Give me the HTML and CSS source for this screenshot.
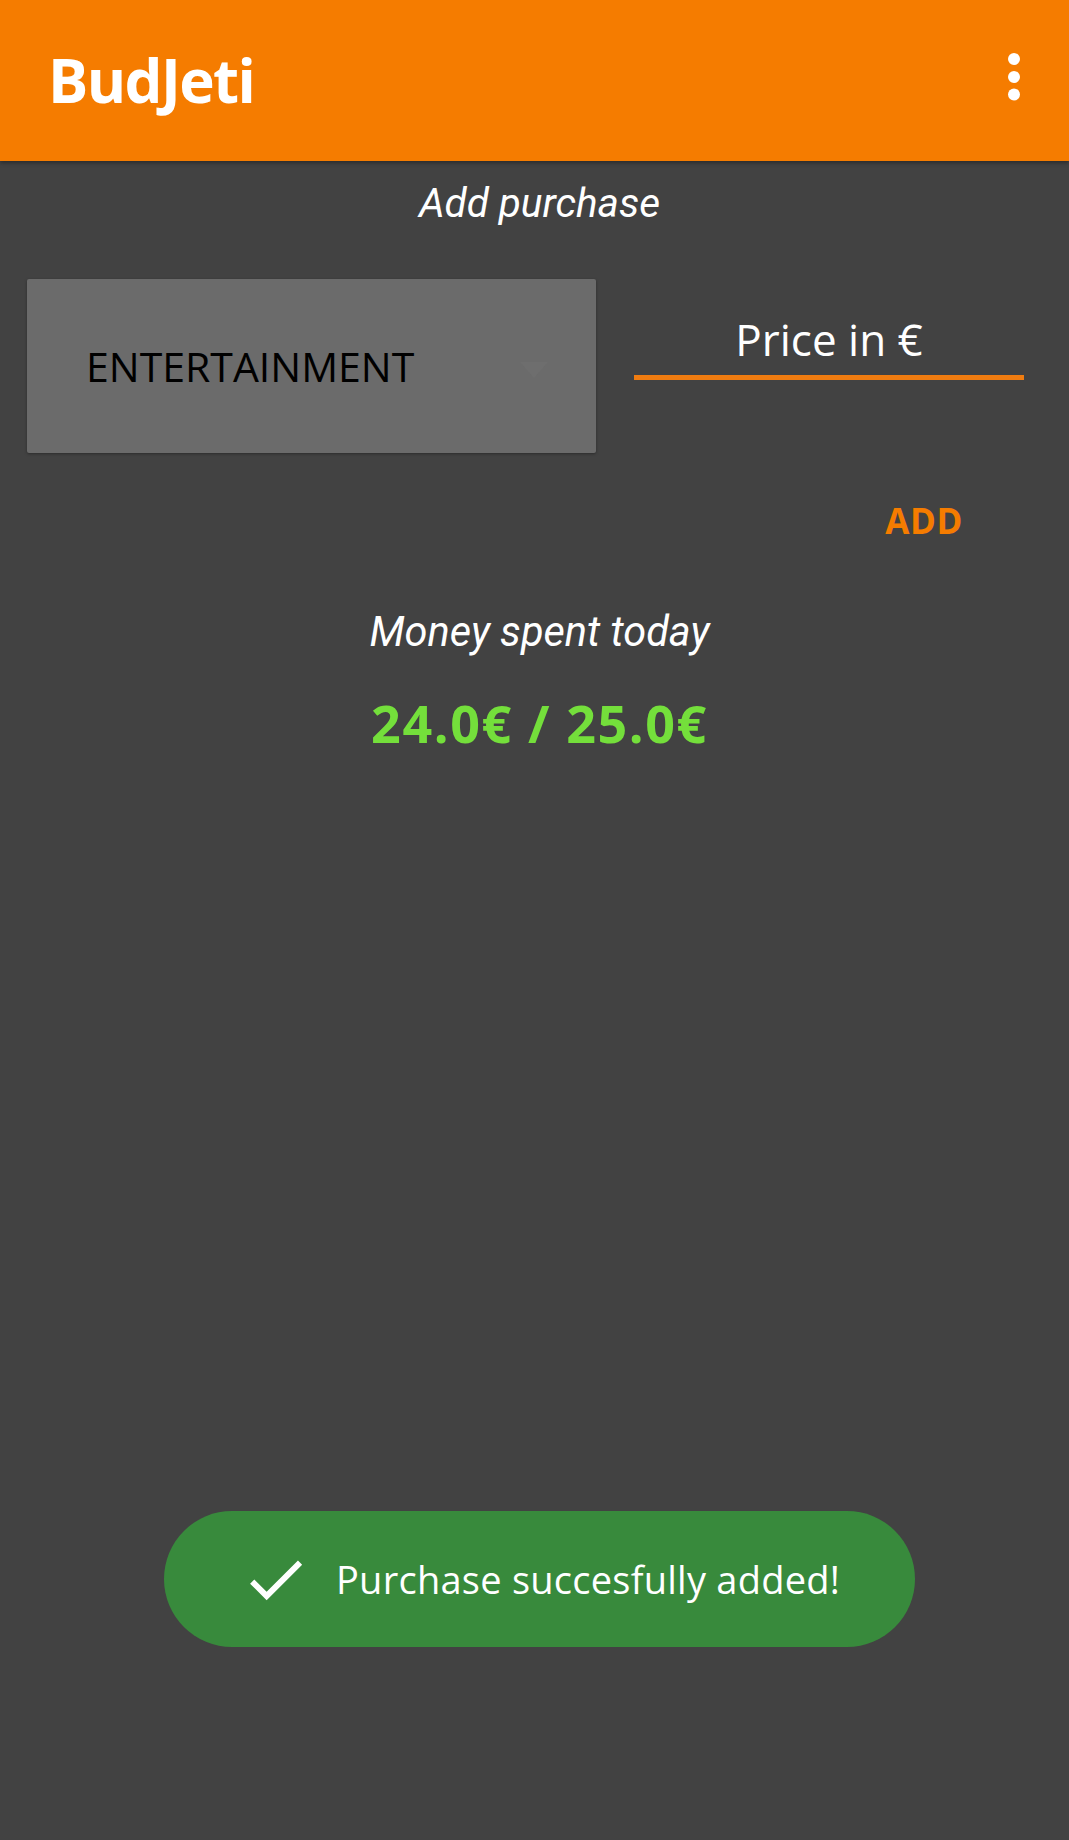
FILE: index.html
```html
<!DOCTYPE html>
<html lang="en">
<head>
<meta charset="utf-8">
<title>BudJeti</title>
<link rel="stylesheet" href="styles.css">
</head>
<body>
<div class="screen">
  <header class="appbar">
    <div class="title">BudJeti</div>
    <svg class="overflow" width="12" height="48" viewBox="0 0 12 48" aria-hidden="true">
      <circle cx="6" cy="6" r="6" fill="#fff"/>
      <circle cx="6" cy="24" r="6" fill="#fff"/>
      <circle cx="6" cy="41.5" r="6" fill="#fff"/>
    </svg>
  </header>

  <main class="content">
    <div class="heading">Add purchase</div>

    <div class="form-row">
      <div class="spinner">
        <span class="spinner-text">ENTERTAINMENT</span>
        <svg class="spinner-arrow" width="32" height="20" viewBox="0 0 32 20" aria-hidden="true">
          <path d="M2 2 L30 2 L16 18 Z" fill="#6e6e6e"/>
        </svg>
      </div>
      <div class="price-field">
        <div class="price-hint">Price in €</div>
        <div class="price-line"></div>
      </div>
    </div>

    <div class="actions">
      <span class="add-btn">ADD</span>
    </div>

    <div class="spent-label">Money spent today</div>
    <div class="spent-value">24.0€ / 25.0€</div>
  </main>

  <div class="toast">
    <svg class="toast-icon" width="71" height="71" viewBox="0 0 24 24" aria-hidden="true">
      <path d="M9 16.17L4.83 12l-1.42 1.41L9 19 21 7l-1.41-1.41z" fill="#fff"/>
    </svg>
    <span class="toast-text">Purchase succesfully added!</span>
  </div>
</div>
</body>
</html>
```

FILE: styles.css
```css
html, body {
  margin: 0;
  padding: 0;
}

body {
  background: #424242;
  width: 1069px;
  height: 1840px;
  overflow: hidden;
}

.screen {
  position: relative;
  width: 1069px;
  height: 1840px;
  background: #424242;
}

.appbar {
  height: 161px;
  box-sizing: border-box;
  background: #f57c00;
  display: flex;
  align-items: flex-start;
  justify-content: space-between;
  padding: 50px 49px 0 48px;
  box-shadow: 0 2px 4px rgba(0, 0, 0, 0.35);
  position: relative;
  z-index: 1;
}

.title {
  font-family: "Open Sans", "DejaVu Sans", sans-serif;
  font-weight: 700;
  font-size: 60px;
  line-height: 60px;
  color: #ffffff;
  letter-spacing: -1.6px;
}

.overflow {
  margin-top: 3px;
}

.content {
  display: flex;
  flex-direction: column;
}

.heading {
  margin-top: 18px;
  padding-left: 10px;
  text-align: center;
  font-family: Roboto, "Liberation Sans", sans-serif;
  font-style: italic;
  font-size: 40.5px;
  line-height: 48px;
  color: #ffffff;
}

.form-row {
  display: flex;
  align-items: flex-start;
  margin-top: 52px;
  padding-left: 27px;
}

.spinner {
  width: 569px;
  height: 174px;
  background: #6b6b6b;
  box-shadow: 0 1px 3px rgba(0, 0, 0, 0.35);
  border-radius: 2px;
  display: flex;
  align-items: center;
  padding-left: 59px;
  box-sizing: border-box;
}

.spinner-text {
  font-family: "Open Sans", "DejaVu Sans", sans-serif;
  font-size: 41px;
  line-height: 60px;
  color: #000000;
  flex: 1;
}

.spinner-arrow {
  margin-right: 46px;
  margin-top: 8px;
}

.price-field {
  width: 390px;
  margin-left: 38px;
  margin-top: 30px;
  display: flex;
  flex-direction: column;
}

.price-hint {
  text-align: center;
  font-family: "Open Sans", "DejaVu Sans", sans-serif;
  font-size: 44px;
  line-height: 60px;
  color: #ffffff;
}

.price-line {
  height: 5px;
  margin-top: 6px;
  background: #f07c10;
}

.actions {
  display: flex;
  justify-content: flex-end;
  margin-top: 48px;
  padding-right: 106px;
}

.add-btn {
  font-family: "Open Sans", "DejaVu Sans", sans-serif;
  font-weight: 700;
  font-size: 35px;
  line-height: 40px;
  letter-spacing: 0.6px;
  color: #f57c00;
}

.spent-label {
  margin-top: 67px;
  padding-left: 10px;
  text-align: center;
  font-family: Roboto, "Liberation Sans", sans-serif;
  font-style: italic;
  font-size: 41.5px;
  line-height: 48px;
  color: #ffffff;
}

.spent-value {
  margin-top: 37px;
  text-align: center;
  font-family: "Open Sans", "DejaVu Sans", sans-serif;
  font-weight: 700;
  font-size: 52px;
  line-height: 60px;
  letter-spacing: 1.6px;
  color: #74df3b;
  padding-left: 10px;
}

.toast {
  position: absolute;
  left: 164px;
  top: 1511px;
  width: 751px;
  height: 136px;
  border-radius: 68px;
  background: #388a3c;
  display: flex;
  align-items: center;
  padding-left: 76px;
  box-sizing: border-box;
}

.toast-icon {
  flex: none;
}

.toast-text {
  margin-left: 25px;
  font-family: "Open Sans", "DejaVu Sans", sans-serif;
  font-size: 38px;
  line-height: 50px;
  letter-spacing: 0.25px;
  color: #ffffff;
}
```
